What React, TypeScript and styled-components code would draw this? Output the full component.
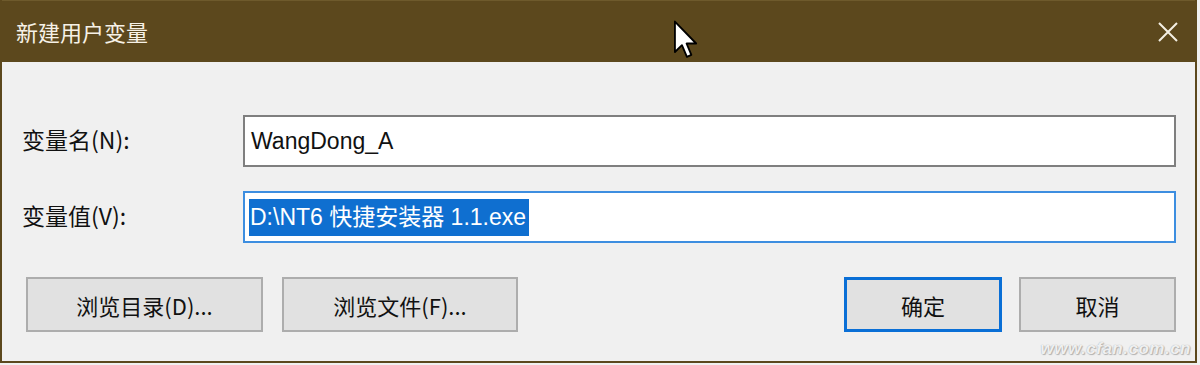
import React from "react";
import styled, { createGlobalStyle } from "styled-components";

const GlobalStyle = createGlobalStyle`
  html, body {
    margin: 0;
    padding: 0;
    background: #f0f0f0;
  }
  body {
    font-family: "Noto Sans CJK SC", "Noto Sans", "Liberation Sans", sans-serif;
  }
`;

const App = () => (
  <>
    <GlobalStyle />
    <Window>
      <TitleBar>
        <Title>新建用户变量</Title>
        <CloseButton aria-label="关闭">
          <svg width="22" height="22" viewBox="0 0 22 22">
            <path d="M2 2 L20 20 M20 2 L2 20" stroke="#f4efe4" strokeWidth="2" />
          </svg>
        </CloseButton>
        <Cursor width="24" height="40" viewBox="0 0 13 21">
          <path
            d="M0.5 0.5 L0.5 17 L4.3 13.3 L7 19.6 L9.4 18.6 L6.8 12.4 L12 12.4 Z"
            fill="#ffffff"
            stroke="#000000"
            strokeWidth="1"
            strokeLinejoin="round"
          />
        </Cursor>
      </TitleBar>
      <Body>
        <FieldRow>
          <Label>变量名(N):</Label>
          <Field>
            <FieldText>WangDong_A</FieldText>
          </Field>
        </FieldRow>
        <FieldRow>
          <Label>变量值(V):</Label>
          <Field $focused>
            <Selected>D:\NT6 快捷安装器 1.1.exe</Selected>
          </Field>
        </FieldRow>
        <ButtonRow>
          <ButtonGroup>
            <Button $width={237}>浏览目录(D)...</Button>
            <Button $width={236}>浏览文件(F)...</Button>
          </ButtonGroup>
          <ButtonGroup $gap={17}>
            <Button $width={158} $primary>
              确定
            </Button>
            <Button $width={157}>取消</Button>
          </ButtonGroup>
        </ButtonRow>
        <Watermark>www.cfan.com.cn</Watermark>
      </Body>
    </Window>
  </>
);

export default App;

const Window = styled.div`
  width: 1197px;
  height: 363px;
  box-sizing: border-box;
  border: 2px solid #5c481d;
  border-top: none;
  background: #f0f0f0;
  display: flex;
  flex-direction: column;
  overflow: hidden;
`;

const TitleBar = styled.div`
  position: relative;
  height: 62px;
  flex-shrink: 0;
  margin: 0 -2px;
  padding: 0 16px;
  background: #5c481d;
  border-top: 1px solid #6e5a2c;
  box-sizing: border-box;
  display: flex;
  align-items: center;
  justify-content: space-between;
`;

const Title = styled.div`
  color: #f6f1e6;
  font-size: 22px;
  line-height: 1;
  margin-top: -2px;
`;

const CloseButton = styled.div`
  width: 22px;
  height: 22px;
  margin-right: 2px;
  display: flex;
`;

const Cursor = styled.svg`
  position: absolute;
  left: 674px;
  top: 19px;
`;

const Body = styled.div`
  position: relative;
  flex: 1;
  padding: 53px 19px 0 20px;
  display: flex;
  flex-direction: column;
  gap: 24px;
`;

const FieldRow = styled.div`
  display: flex;
  align-items: center;
  height: 52px;
`;

const Label = styled.div`
  width: 221px;
  flex-shrink: 0;
  font-size: 23px;
  color: #111111;
  margin-top: -4px;
`;

const Field = styled.div<{ $focused?: boolean }>`
  flex: 1;
  height: 52px;
  box-sizing: border-box;
  border: 2px solid ${({ $focused }) => ($focused ? "#3d8ee0" : "#7f7f7f")};
  background: #ffffff;
  display: flex;
  align-items: center;
  padding-left: 4px;
`;

const FieldText = styled.span`
  font-family: "Liberation Sans", "Noto Sans CJK SC", sans-serif;
  font-size: 23px;
  color: #111111;
  padding-left: 2px;
`;

const Selected = styled.span`
  font-family: "Liberation Sans", "Noto Sans CJK SC", sans-serif;
  font-size: 23px;
  line-height: 37px;
  color: #ffffff;
  background: #0f6fd0;
  padding: 0 3px 0 1px;
`;

const ButtonRow = styled.div`
  display: flex;
  justify-content: space-between;
  align-items: center;
  padding-left: 4px;
  margin-top: 10px;
`;

const ButtonGroup = styled.div<{ $gap?: number }>`
  display: flex;
  gap: ${({ $gap }) => $gap ?? 19}px;
`;

const Button = styled.div<{ $width: number; $primary?: boolean }>`
  width: ${({ $width }) => $width}px;
  height: 55px;
  box-sizing: border-box;
  background: #e1e1e1;
  border: ${({ $primary }) =>
    $primary ? "3px solid #0a6fd6" : "2px solid #adadad"};
  display: flex;
  align-items: center;
  justify-content: center;
  font-size: 22px;
  color: #111111;
`;

const Watermark = styled.div`
  position: absolute;
  right: 4px;
  bottom: 2px;
  font-family: "Liberation Sans", sans-serif;
  font-style: italic;
  font-weight: bold;
  font-size: 17px;
  color: rgba(255, 255, 255, 0.85);
  text-shadow: 0 0 1px #9a9a9a, 1px 1px 1px #b5b5b5;
  letter-spacing: 0.5px;
`;
